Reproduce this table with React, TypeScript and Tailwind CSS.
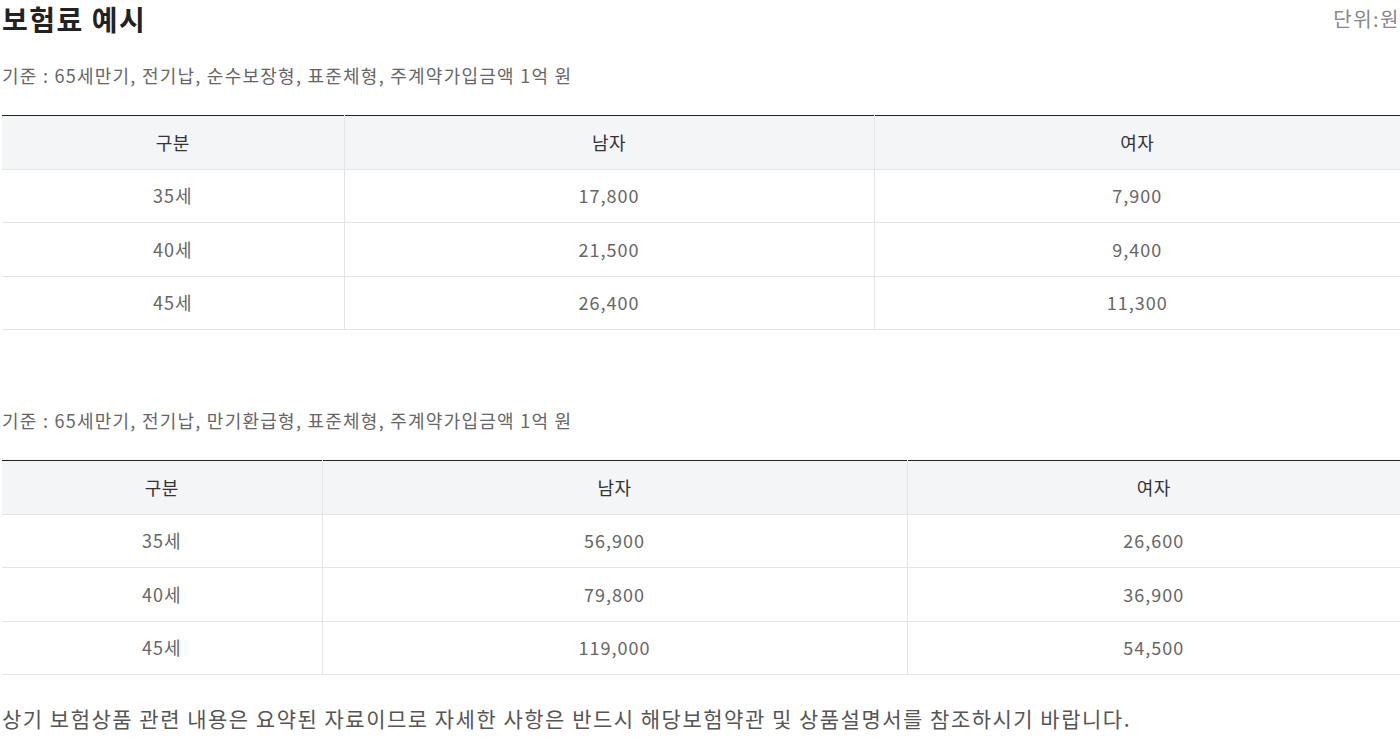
import React from "react";

type Row = [string, string, string];

function PremiumTable({ rows, widths }: { rows: Row[]; widths: [string, string, string] }) {
  return (
    <table className="w-full border-collapse table-fixed border-t border-t-[#222]">
      <colgroup>
        <col className={widths[0]} />
        <col className={widths[1]} />
        <col className={widths[2]} />
      </colgroup>
      <thead>
        <tr className="bg-[#f4f5f7] h-[53.5px]">
          <th className="font-normal text-[18px] tracking-[0.5px] text-[#333] border-b border-[#e4e5e7] border-r">구분</th>
          <th className="font-normal text-[18px] tracking-[0.5px] text-[#333] border-b border-[#e4e5e7] border-r">남자</th>
          <th className="font-normal text-[18px] tracking-[0.5px] text-[#333] border-b border-[#e4e5e7]">여자</th>
        </tr>
      </thead>
      <tbody>
        {rows.map((r) => (
          <tr key={r[0]} className="h-[53.5px]">
            <td className="text-center text-[18px] tracking-[1px] text-[#666] border-b border-r border-[#e4e5e7]">{r[0]}</td>
            <td className="text-center text-[18px] tracking-[1px] text-[#666] border-b border-r border-[#e4e5e7]">{r[1]}</td>
            <td className="text-center text-[18px] tracking-[1px] text-[#666] border-b border-[#e4e5e7]">{r[2]}</td>
          </tr>
        ))}
      </tbody>
    </table>
  );
}

export default function App() {
  return (
    <div className="w-[1400px] h-[750px] bg-white pl-[2px] font-['Noto_Sans_CJK_KR','Noto_Sans',sans-serif] overflow-hidden">
      <div className="flex items-start justify-between h-[40px]">
        <h2 className="text-[28px] font-bold tracking-[1.5px] text-[#222] leading-[40px] -mt-[1px]">보험료 예시</h2>
        <span className="text-[20px] tracking-[1.5px] text-[#888] leading-[40px] -mt-[1px] whitespace-nowrap">단위:원</span>
      </div>
      <p className="mt-[20px] text-[18px] tracking-[1.25px] text-[#666] leading-[30px]">기준 : 65세만기, 전기납, 순수보장형, 표준체형, 주계약가입금액 1억 원</p>
      <div className="mt-[25px]">
        <PremiumTable
          widths={["w-[342px]", "w-[530px]", "w-[526px]"]}
          rows={[
            ["35세", "17,800", "7,900"],
            ["40세", "21,500", "9,400"],
            ["45세", "26,400", "11,300"],
          ]}
        />
      </div>
      <p className="mt-[75px] text-[18px] tracking-[1.25px] text-[#666] leading-[30px]">기준 : 65세만기, 전기납, 만기환급형, 표준체형, 주계약가입금액 1억 원</p>
      <div className="mt-[25px]">
        <PremiumTable
          widths={["w-[320px]", "w-[585px]", "w-[493px]"]}
          rows={[
            ["35세", "56,900", "26,600"],
            ["40세", "79,800", "36,900"],
            ["45세", "119,000", "54,500"],
          ]}
        />
      </div>
      <p className="mt-[28px] text-[21px] tracking-[1.5px] text-[#555] leading-[30px]">상기 보험상품 관련 내용은 요약된 자료이므로 자세한 사항은 반드시 해당보험약관 및 상품설명서를 참조하시기 바랍니다.</p>
    </div>
  );
}
